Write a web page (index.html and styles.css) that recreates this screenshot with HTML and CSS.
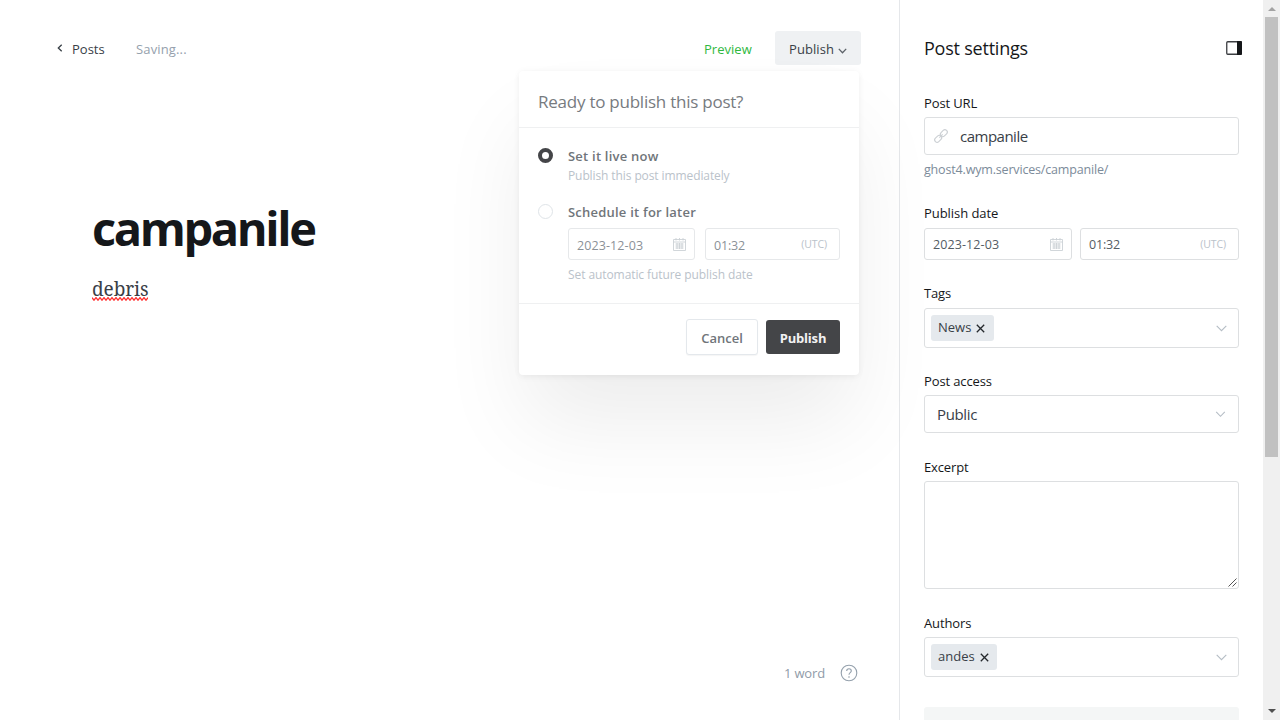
FILE: index.html
```html
<!DOCTYPE html>
<html lang="en">
<head>
<meta charset="utf-8">
<title>campanile</title>
<link rel="stylesheet" href="styles.css">
</head>
<body>
<div class="app">
  <main class="editor">
    <header class="toolbar">
      <div class="toolbar-left">
        <a class="back"><svg class="back-icon" width="6" height="8" viewBox="0 0 6 8"><path d="M4.7.7 1.3 4l3.4 3.3"/></svg><span class="t-posts">Posts</span></a>
        <span class="status">Saving...</span>
      </div>
      <div class="toolbar-right">
        <a class="preview">Preview</a>
        <div class="publish-trigger"><span class="t-trigger">Publish</span><svg class="trigger-icon" width="9" height="6" viewBox="0 0 9 6"><path d="M.8.9 4.5 4.7 8.2.9"/></svg></div>
      </div>
      <section class="publish-menu">
        <h2 class="menu-title"><span class="t-ready">Ready to publish this post?</span></h2>
        <div class="menu-body">
          <div class="option">
            <span class="radio radio-on"></span>
            <div class="option-text">
              <div class="option-label"><span class="t-live">Set it live now</span></div>
              <div class="option-help"><span class="t-immediate">Publish this post immediately</span></div>
            </div>
          </div>
          <div class="option option-later">
            <span class="radio"></span>
            <div class="option-text">
              <div class="option-label"><span class="t-later">Schedule it for later</span></div>
              <div class="menu-dates">
                <div class="date-box"><span class="t-date">2023-12-03</span><svg class="calendar" width="13" height="14" viewBox="0 0 13 14"><path d="M.5 2.5h12v11H.5zM.5 5h12M3 1v2.5M6.5 1v2.5M10 1v2.5M2.5 7h8M2.5 9h8M2.5 11h8M4 6v6M6.5 6v6M9 6v6"/></svg></div>
                <div class="date-box"><span class="t-time">01:32</span><span class="utc">(UTC)</span></div>
              </div>
              <div class="option-help"><span class="t-future">Set automatic future publish date</span></div>
            </div>
          </div>
        </div>
        <footer class="menu-footer">
          <button class="btn btn-cancel"><span class="t-cancel">Cancel</span></button>
          <button class="btn btn-publish"><span class="t-publish">Publish</span></button>
        </footer>
      </section>
    </header>
    <article class="post">
      <h1 class="post-title"><span class="t-title">campanile</span></h1>
      <p class="post-body"><span class="misspelled">debris<svg class="squiggle" width="56" height="4" viewBox="0 0 56 4"><path d="M0 .6 2 3.2 4 .6 6 3.2 8 .6 10 3.2 12 .6 14 3.2 16 .6 18 3.2 20 .6 22 3.2 24 .6 26 3.2 28 .6 30 3.2 32 .6 34 3.2 36 .6 38 3.2 40 .6 42 3.2 44 .6 46 3.2 48 .6 50 3.2 52 .6 54 3.2 56 .6"/></svg></span></p>
    </article>
    <footer class="editor-footer">
      <span class="words">1 word</span>
      <svg class="help" width="18" height="18" viewBox="0 0 18 18"><circle cx="9" cy="9" r="7.8"/><path d="M6.7 7.1c0-1.4 1-2.3 2.3-2.3s2.3.9 2.3 2.1c0 1.7-2.3 1.8-2.3 3.8"/><circle class="help-dot" cx="9" cy="13" r=".8"/></svg>
    </footer>
  </main>
  <aside class="settings">
    <header class="settings-head">
      <h2 class="settings-title">Post settings</h2>
      <svg width="16" height="14" viewBox="0 0 16 14"><rect class="panel-frame" x=".75" y=".75" width="14.5" height="12.5" rx="1"/><path class="panel-side" d="M11 0h4a1 1 0 0 1 1 1v12a1 1 0 0 1-1 1h-4z"/></svg>
    </header>
    <div class="field field-url">
      <label class="label t-url">Post URL</label>
      <div class="box box-url">
        <svg width="14" height="14" viewBox="0 0 14 14"><g transform="rotate(-45 7 7)"><rect x="-.9" y="4.6" width="7.8" height="4.8" rx="2.4"/><rect x="7.1" y="4.6" width="7.8" height="4.8" rx="2.4"/><path d="M4.6 7h4.8"/></g></svg>
        <span class="t-slug">campanile</span>
      </div>
      <div class="url-help"><span class="t-help">ghost4.wym.services/campanile/</span></div>
    </div>
    <div class="field field-date">
      <label class="label t-pubdate">Publish date</label>
      <div class="date-row">
        <div class="date-box"><span class="t-date">2023-12-03</span><svg class="calendar" width="13" height="14" viewBox="0 0 13 14"><path d="M.5 2.5h12v11H.5zM.5 5h12M3 1v2.5M6.5 1v2.5M10 1v2.5M2.5 7h8M2.5 9h8M2.5 11h8M4 6v6M6.5 6v6M9 6v6"/></svg></div>
        <div class="date-box"><span class="t-time">01:32</span><span class="utc">(UTC)</span></div>
      </div>
    </div>
    <div class="field field-tags">
      <label class="label t-tags">Tags</label>
      <div class="box box-token">
        <span class="token token-news"><span class="t-news">News</span><svg width="9" height="9" viewBox="0 0 9 9"><path d="m.8.8 7.4 7.4M8.2.8.8 8.2"/></svg></span>
        <svg class="caret" width="11" height="7" viewBox="0 0 11 7"><path d="M.7.8 5.5 5.7 10.3.8"/></svg>
      </div>
    </div>
    <div class="field field-access">
      <label class="label t-access">Post access</label>
      <div class="box box-select"><span class="t-public">Public</span><svg class="caret caret-select" width="11" height="7" viewBox="0 0 11 7"><path d="M1.2.8 5.5 5.3 9.8.8"/></svg></div>
    </div>
    <div class="field field-excerpt">
      <label class="label t-excerpt">Excerpt</label>
      <div class="box box-area"><svg width="9" height="9" viewBox="0 0 9 9"><path d="M.5 8.5l8-8M4.5 8.5l4-4"/></svg></div>
    </div>
    <div class="field field-authors">
      <label class="label t-authors">Authors</label>
      <div class="box box-token">
        <span class="token token-andes"><span class="t-andes">andes</span><svg width="9" height="9" viewBox="0 0 9 9"><path d="m.8.8 7.4 7.4M8.2.8.8 8.2"/></svg></span>
        <svg class="caret" width="11" height="7" viewBox="0 0 11 7"><path d="M.7.8 5.5 5.7 10.3.8"/></svg>
      </div>
    </div>
    <div class="next-block"></div>
  </aside>
  <div class="scrollbar">
    <svg class="arrow arrow-up" width="8" height="4" viewBox="0 0 8 4"><path d="M0 4 4 0l4 4z"/></svg>
    <div class="thumb"></div>
    <svg class="arrow arrow-down" width="8" height="4" viewBox="0 0 8 4"><path d="M0 0h8L4 4z"/></svg>
  </div>
</div>
</body>
</html>
```
FILE: styles.css
```css
* { box-sizing: border-box; }
body { margin: 0; overflow: hidden; font-family: "Open Sans", "Noto Sans", sans-serif; font-size: 13px; color: #15171a; background: #fff; }
svg { fill: none; flex: none; display: block; }
h1, h2, p { margin: 0; }
span { white-space: nowrap; }
.app { display: flex; width: 1280px; height: 720px; overflow: hidden; }

.editor { display: flex; flex-direction: column; width: 899px; height: 720px; }
.toolbar { position: relative; display: flex; justify-content: space-between; align-items: center; height: 34px; margin: 31px 38px 0 57px; }
.toolbar-left, .toolbar-right, .back { display: flex; align-items: center; }
.back { gap: 9px; width: 79px; font-weight: 500; color: #394047; }
.t-posts, .status, .preview, .t-trigger { padding-top: 2px; }
.back-icon { stroke: #394047; stroke-width: 1.3; }
.status { color: #95a1ad; letter-spacing: .15px; }
.preview { width: 71px; font-weight: 500; color: #30b83f; letter-spacing: .02px; }
.publish-trigger { display: flex; align-items: center; gap: 4px; width: 86px; height: 34px; padding-left: 14px; border-radius: 3px; background: #eff1f3; font-weight: 500; letter-spacing: .08px; color: #394047; }
.trigger-icon { stroke: #5c6268; stroke-width: 1.3; margin-top: 5px; }

.publish-menu { position: absolute; z-index: 2; top: 40px; right: 2px; width: 340px; height: 303.5px; border-radius: 4px; background: #fff; box-shadow: 0 0 7px rgba(0,0,0,.04), 0 3px 7px rgba(0,0,0,.03), 0 53px 84px -6px rgba(0,0,0,.075); color: #73777b; }
.menu-title { display: flex; align-items: center; height: 57px; padding: 5px 19px 0; border-bottom: 1px solid #eff0f1; font-size: 17px; font-weight: 400; color: #777b7f; letter-spacing: -.24px; }
.menu-body { height: 176px; padding: 20px 19px 0; border-bottom: 1px solid #eff0f1; }
.option { display: flex; gap: 15px; }
.option-later { margin-top: 19px; }
.radio { width: 15px; height: 15px; border: 1px solid #dfe4e8; border-radius: 50%; flex: none; }
.radio-on { border: 4px solid #444548; }
.option-text { flex: 1; }
.option-label { height: 18px; line-height: 17px; font-weight: 600; letter-spacing: .22px; color: #70757a; }
.option-help { height: 19px; line-height: 20px; font-size: 12px; letter-spacing: -.1px; color: #bac2ca; }
.menu-dates { display: grid; grid-template-columns: 127px 135px; gap: 10px; height: 39px; margin: 0 -1px 0 0; padding-top: 6px; }
.menu-dates .date-box { height: 32px; color: #8b9197; border-color: #e6e8ea; }
.menu-dates .t-date, .menu-dates .t-time { padding-top: 2px; }
.menu-dates + .option-help { margin-top: 4px; letter-spacing: -.08px; }
.menu-footer { display: flex; justify-content: flex-end; gap: 8px; padding: 15px 19px 15px 20px; }
.btn { display: flex; align-items: center; justify-content: center; height: 34px; margin: 1px 0; padding: 1px 0 0; border: 0; border-radius: 3px; font: 600 13px "Open Sans", "Noto Sans", sans-serif; }
.btn-cancel { width: 72px; height: 36px; margin: 0; border: 1px solid #e4e8ec; background: #fff; color: #70757a; box-shadow: 0 1px 1px rgba(0,0,0,.04); }
.btn-publish { width: 74px; background: #444548; color: #f2f2f3; font-weight: 700; letter-spacing: -.2px; }

.post { padding: 134px 0 0 92px; }
.post-title { height: 60px; line-height: 59px; font-size: 47px; font-weight: 700; letter-spacing: -2.4px; }
.post-body { height: 32px; margin-top: 14px; line-height: 32px; color: #394047; }
.misspelled { position: relative; display: inline-block; font-family: "Noto Serif", "Liberation Serif", serif; font-size: 19px; letter-spacing: -.1px; }
.squiggle { position: absolute; left: 0; top: 24px; stroke: #ff3030; stroke-width: 1.3; }
.editor-footer { display: flex; justify-content: flex-end; align-items: center; gap: 15px; height: 20px; margin: auto 41px 37px 0; color: #8f9ba8; }
.words { letter-spacing: -.15px; }
.help { stroke: #94a0ac; stroke-width: 1.1; }
.help-dot { fill: #94a0ac; stroke: none; }

.settings { width: 364px; height: 720px; padding: 0 24px; border-left: 1px solid #e5e7ea; overflow: hidden; }
.settings-head { display: flex; align-items: center; justify-content: space-between; height: 30px; margin: 33px -3px 0 0; }
.settings-title { font-size: 18px; font-weight: 500; letter-spacing: -.22px; }
.panel-frame { stroke: #3c3e42; stroke-width: 1.3; }
.panel-side { fill: #15171a; }
.label { display: block; height: 24px; line-height: 20px; font-weight: 500; letter-spacing: -.13px; }
.t-pubdate { letter-spacing: -.05px; }
.box, .date-box { display: flex; align-items: center; border: 1px solid #dddfe1; border-radius: 3px; background: #fff; }
.field-url { height: 110px; margin-top: 30px; }
.box-url { height: 38px; padding-left: 9px; gap: 12px; font-size: 15px; letter-spacing: -.5px; color: #394047; }
.box-url svg { stroke: #ccd0d4; stroke-width: 1.1; overflow: visible; }
.url-help { height: 26px; line-height: 29px; font-size: 12.5px; letter-spacing: -.17px; color: #7c8b9a; }
.field-date { height: 80px; }
.date-row { display: grid; grid-template-columns: 148px 159px; gap: 8px; margin-top: 1px; }
.date-box { justify-content: space-between; height: 32px; padding: 0 8px; font-size: 12.5px; letter-spacing: .1px; color: #545c64; }
.t-time { letter-spacing: -.2px; }
.calendar { stroke: #ccd1d6; stroke-width: .9; }
.utc { padding-right: 4px; font-size: 10.5px; color: #bac2ca; letter-spacing: -.1px; }
.field-tags { height: 88px; }
.field-tags .box { margin-top: 1px; }
.box-token { justify-content: space-between; height: 40px; padding: 0 11px 0 6px; }
.token { display: flex; align-items: center; gap: 5px; height: 26px; padding: 0 7px; border-radius: 3px; background: #e5e9ed; font-weight: 500; color: #394047; }
.t-news, .t-andes { padding-bottom: 2px; }
.token-news { width: 63px; }
.token-andes { width: 66px; }
.token svg { stroke: #24282c; stroke-width: 1.3; }
.caret { stroke: #b5bdc5; stroke-width: 1.1; }
.field-access { height: 86px; }
.box-select { justify-content: space-between; height: 38px; padding: 0 12px; font-size: 15px; letter-spacing: -.35px; color: #394047; }
.field-excerpt { height: 156px; }
.box-area { height: 108px; align-items: flex-end; justify-content: flex-end; padding: 1px; }
.box-area svg { stroke: #555; stroke-width: 1; }
.field-authors { height: 94px; }
.next-block { height: 40px; border-radius: 3px; background: #f4f6f6; }

.scrollbar { display: flex; flex-direction: column; align-items: center; width: 17px; height: 720px; background: #f0f0f0; }
.arrow { fill: #505050; }
.arrow-up { margin: 7px 0 6px; fill: #a3a3a3; }
.thumb { width: 13px; height: 440px; background: #c1c1c1; }
.arrow-down { margin: auto 0 7px; }
```
